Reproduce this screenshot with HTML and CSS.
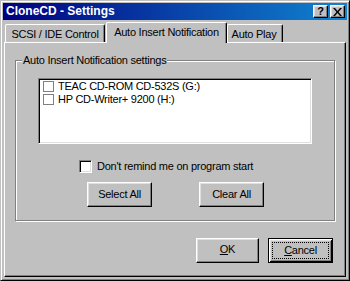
FILE: index.html
```html
<!DOCTYPE html>
<html>
<head>
<meta charset="UTF-8">
<title>CloneCD - Settings</title>
<link rel="stylesheet" href="styles.css">
</head>
<body>
<div class="window">
	<div class="titlebar">
		<span class="title">CloneCD - Settings</span>
		<div class="caption-btns">
			<span class="cbtn help">?</span>
			<span class="cbtn close">
				<svg width="9" height="8" viewBox="0 0 9 8"><path d="M0 0h2l2.5 3 2.5-3h2l-3.5 4 3.5 4h-2l-2.5-3-2.5 3h-2l3.5-4z" fill="#000"/></svg>
			</span>
		</div>
	</div>

	<div class="tabs">
		<div class="tab first">SCSI / IDE Control</div>
		<div class="tab active">Auto Insert Notification</div>
		<div class="tab last">Auto Play</div>
	</div>

	<div class="panel">
		<div class="group">
			<div class="group-label">Auto Insert Notification settings</div>
			<div class="listbox">
				<div class="item"><span class="flatcheck"></span>TEAC CD-ROM CD-532S (G:)</div>
				<div class="item"><span class="flatcheck"></span>HP CD-Writer+ 9200 (H:)</div>
			</div>
			<div class="check-row"><span class="check3d"></span>Don't remind me on program start</div>
			<div class="group-buttons">
				<button class="btn">Select All</button>
				<button class="btn clear">Clear All</button>
			</div>
		</div>

		<div class="dialog-buttons">
			<button class="btn ok"><span><u>O</u>K</span></button>
			<button class="btn default"><span class="focus"><u>C</u>ancel</span></button>
		</div>
	</div>
</div>
</body>
</html>
```

FILE: styles.css
```css
* {
	margin: 0;
	padding: 0;
	box-sizing: border-box;
}

body {
	background: #c0c0c0;
	font-family: "Liberation Sans", Arial, sans-serif;
	font-size: 11px;
	letter-spacing: -0.25px;
	line-height: 13px;
	color: #000;
}

.window {
	width: 350px;
	height: 281px;
	background: #c0c0c0;
	border: 1px solid;
	border-color: #c0c0c0 #000 #000 #c0c0c0;
	box-shadow: inset 1px 1px #fff, inset -1px -1px #808080;
	padding: 2px;
}

/* title bar */
.titlebar {
	height: 17px;
	display: flex;
	align-items: center;
	justify-content: space-between;
	padding: 0 2px 0 3px;
	background: linear-gradient(90deg, #000080, #1084d0);
}

.title {
	font-weight: bold;
	font-size: 12px;
	letter-spacing: 0;
	line-height: 17px;
	color: #fff;
}

.caption-btns {
	display: flex;
	gap: 2px;
}

.cbtn {
	width: 15px;
	height: 13px;
	display: flex;
	align-items: center;
	justify-content: center;
	background: #c0c0c0;
	border: 1px solid;
	border-color: #fff #000 #000 #fff;
	box-shadow: inset -1px -1px #808080, inset 1px 1px #dfdfdf;
}

.help {
	font-weight: bold;
	font-size: 11px;
	letter-spacing: 0;
	line-height: 11px;
}

/* tabs */
.tabs {
	height: 22px;
	display: flex;
	align-items: flex-end;
	padding-left: 2px;
}

.tab {
	height: 18px;
	padding-top: 2px;
	line-height: 15px;
	text-align: center;
	border-top: 1px solid #fff;
	border-left: 1px solid #fff;
	border-right: 1px solid #000;
	border-top-left-radius: 2px;
	border-top-right-radius: 2px;
	box-shadow: inset -1px 0 #808080;
	white-space: nowrap;
}

.tab.first {
	width: 100px;
}

.tab.active {
	position: relative;
	z-index: 1;
	width: 121px;
	height: 21px;
	margin-left: 1px;
	margin-bottom: -1px;
	padding-top: 2px;
	background: #c0c0c0;
}

.tab.last {
	width: 56px;
	padding-right: 2px;
}

/* tab page */
.panel {
	height: 235px;
	margin: 0 1px;
	border: 1px solid;
	border-color: #fff #000 #000 #fff;
	box-shadow: inset -1px -1px #808080;
}

.group {
	width: 320px;
	height: 161px;
	margin: 17px 0 0 10px;
	border: 1px solid #808080;
	box-shadow: 1px 1px #fff, inset 1px 1px #fff;
}

.group-label {
	width: max-content;
	margin: -8px 0 0 6px;
	padding: 0 1px;
	line-height: 14px;
	background: #c0c0c0;
}

.listbox {
	width: 274px;
	height: 66px;
	margin: 11px 0 0 22px;
	padding: 1px;
	background: #fff;
	border: 1px solid;
	border-color: #808080 #fff #fff #808080;
	box-shadow: inset 1px 1px #000, inset -1px -1px #dfdfdf;
}

.item {
	height: 13px;
	display: flex;
	align-items: center;
	padding-left: 3px;
	white-space: nowrap;
}

.flatcheck {
	width: 11px;
	height: 11px;
	margin-right: 4px;
	border: 1px solid #808080;
	background: #fff;
}

.check-row {
	height: 13px;
	display: flex;
	align-items: center;
	margin: 16px 0 0 63px;
}

.check3d {
	width: 13px;
	height: 13px;
	margin-right: 5px;
	background: #fff;
	border: 1px solid;
	border-color: #808080 #fff #fff #808080;
	box-shadow: inset 1px 1px #000, inset -1px -1px #dfdfdf;
}

.group-buttons {
	display: flex;
	margin: 9px 0 0 71px;
	gap: 47px;
}

/* push buttons */
.btn {
	width: 65px;
	height: 25px;
	display: flex;
	align-items: center;
	justify-content: center;
	padding-bottom: 1px;
	font: inherit;
	letter-spacing: inherit;
	color: #000;
	background: #c0c0c0;
	border: 1px solid;
	border-color: #fff #000 #000 #fff;
	box-shadow: inset -1px -1px #808080, inset 1px 1px #dfdfdf;
}

.dialog-buttons {
	display: flex;
	justify-content: flex-end;
	gap: 9px;
	margin: 17px 12px 0 0;
}

.btn.ok {
	width: 63px;
	padding-bottom: 3px;
}

.btn.default {
	padding: 3px;
	border: 1px solid #000;
	box-shadow: inset 1px 1px #fff, inset -1px -1px #000, inset 2px 2px #dfdfdf, inset -2px -2px #808080;
}

.focus {
	width: 100%;
	height: 100%;
	display: flex;
	align-items: center;
	justify-content: center;
	padding-bottom: 1px;
	border: 1px dotted #000;
}

u {
	text-decoration: underline;
	text-underline-offset: 1px;
}
```
